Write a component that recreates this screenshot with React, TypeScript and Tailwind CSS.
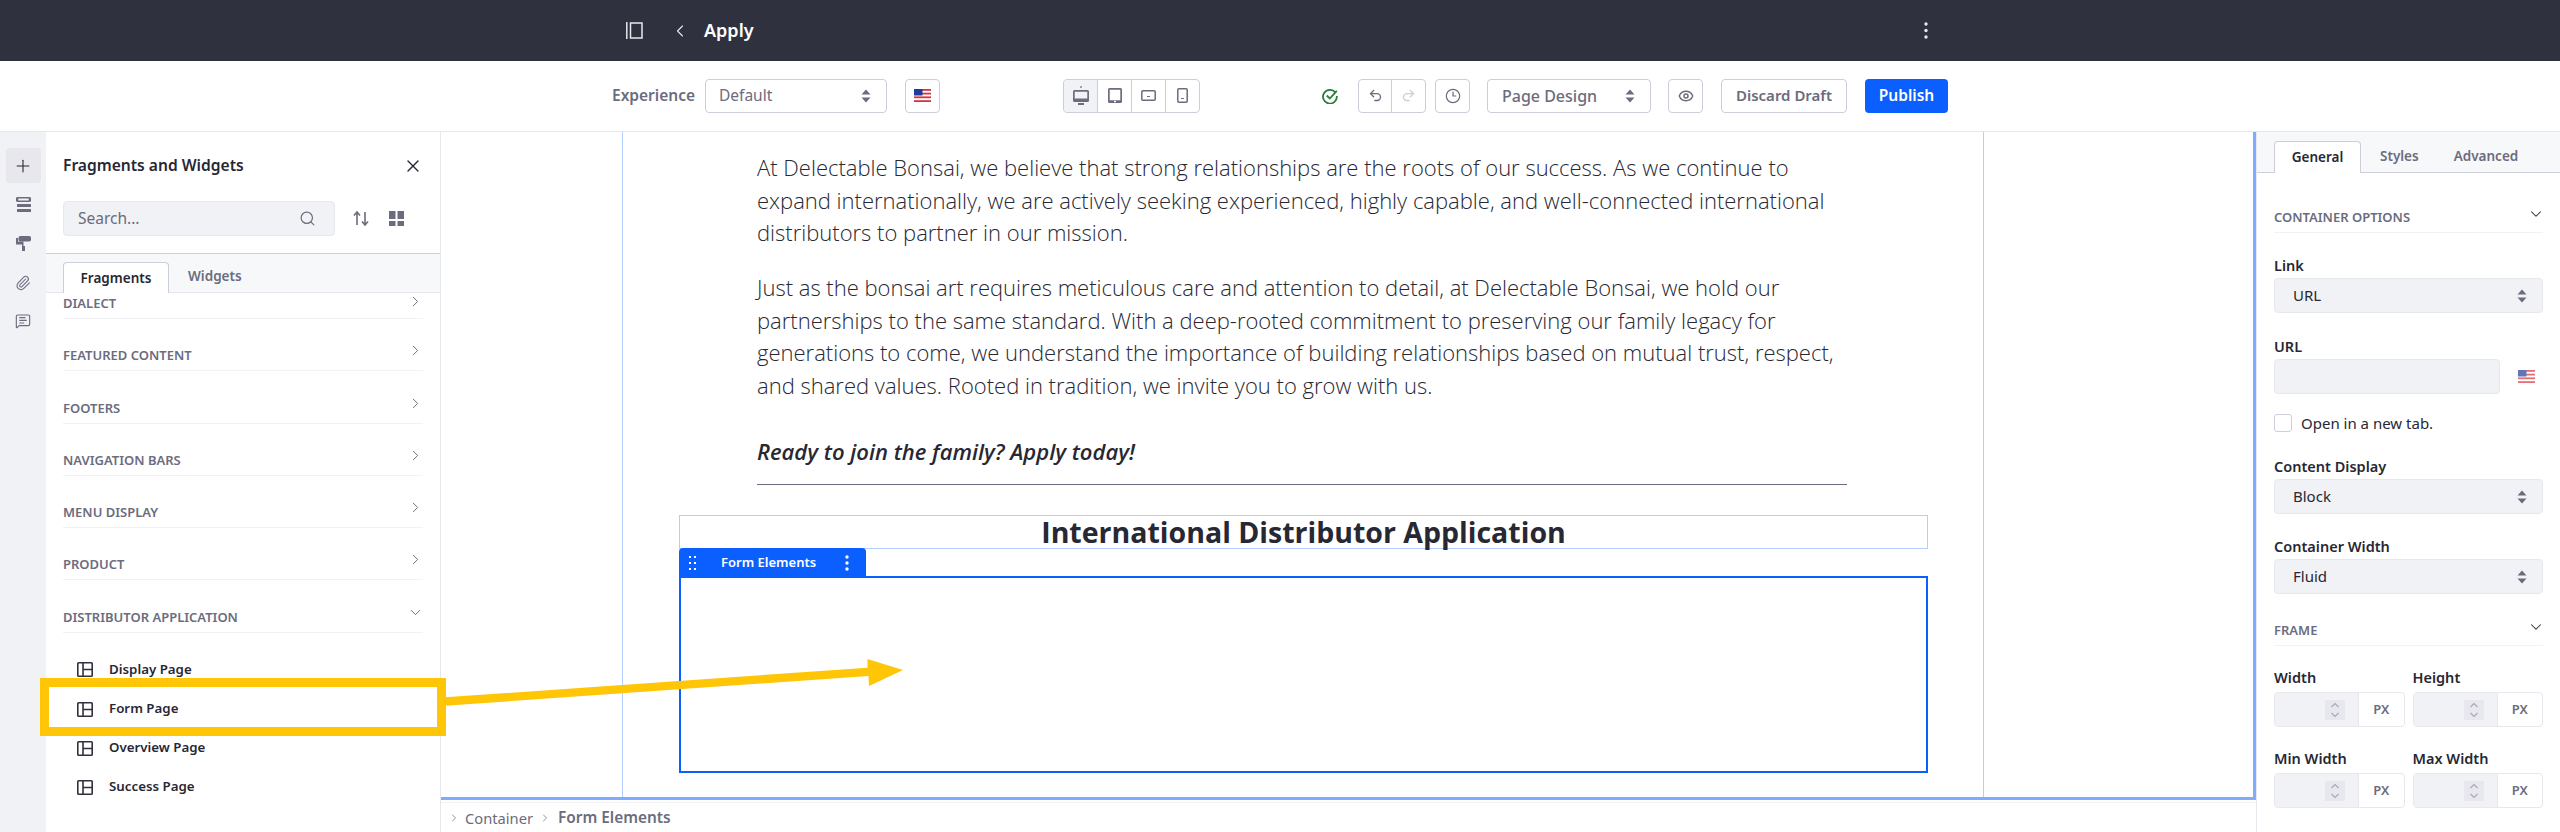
import { ChevronDown, ChevronLeft, ChevronRight, Clock3, Eye, MessageSquareText, Paperclip, Plus, Redo2, Search, Undo2, X } from "lucide-react";

const categories = ["FEATURED CONTENT", "FOOTERS", "NAVIGATION BARS", "MENU DISPLAY", "PRODUCT"];
const pages = ["Display Page", "Form Page", "Overview Page", "Success Page"];

function Updown({ className = "text-[#6b6c7e]" }: { className?: string }) {
  return (
    <svg width="10" height="14" viewBox="0 0 10 14" className={className} fill="currentColor">
      <path d="M5 0.500 9.500 5.500H0.500Z" />
      <path d="M5 13.500 0.500 8.500H9.500Z" />
    </svg>
  );
}

function Flag({ faded = false }: { faded?: boolean }) {
  return (
    <svg width="17" height="13" viewBox="0 0 17 13" className={faded ? "opacity-70" : ""}>
      <rect width="17" height="13" fill="#fff" />
      <rect y="0" width="17" height="1.800" fill="#d8343c" />
      <rect y="3.700" width="17" height="1.800" fill="#d8343c" />
      <rect y="7.400" width="17" height="1.800" fill="#d8343c" />
      <rect y="11.200" width="17" height="1.800" fill="#d8343c" />
      <rect width="8.500" height="6.500" fill="#1f3b9b" />
    </svg>
  );
}

function PageIcon() {
  return (
    <svg width="16" height="15" viewBox="0 0 16 15" fill="none" stroke="#30313f" strokeWidth="1.600">
      <rect x="0.800" y="0.800" width="14.400" height="13.400" rx="0.800" />
      <path d="M6 1v13M6 7.500h9.500" />
    </svg>
  );
}

function PanelSelect({ value }: { value: string }) {
  return (
    <div className="flex h-[35px] items-center justify-between rounded-[4px] border border-[#e7e7ed] bg-[#f1f2f5] pl-[18px] pr-[15px] text-[15px] text-[#272833]">
      <span>{value}</span>
      <Updown />
    </div>
  );
}

function Label({ children }: { children: string }) {
  return <div className="mb-[4px] text-[14.500px] font-semibold leading-[18px] text-[#272833]">{children}</div>;
}

function SectionHead({ title }: { title: string }) {
  return (
    <div className="flex h-[30px] items-start justify-between border-b border-[#f1f2f5]">
      <span className="pt-[6px] text-[13px] font-semibold leading-[16px] text-[#6b6c7e]">{title}</span>
      <ChevronDown size={18} strokeWidth={1.400} className="mr-[-2px] mt-[2px] text-[#272833]" />
    </div>
  );
}

function PxInput({ label }: { label: string }) {
  return (
    <div className="w-[131px]">
      <div className="mb-[6px] text-[14.500px] font-semibold leading-[18px] text-[#272833]">{label}</div>
      <div className="flex h-[35px] overflow-hidden rounded-[4px] border border-[#e7e7ed]">
        <div className="flex w-[83px] items-center justify-end bg-[#f1f2f5] pr-[13px]">
          <div className="flex h-[20px] w-[20px] flex-col items-center justify-center bg-[#e7e7ed] text-[#a7a9bc]">
            <svg width="10" height="16" viewBox="0 0 10 16" fill="none" stroke="currentColor" strokeWidth="1.200">
              <path d="M1.500 5 5 1.500 8.500 5M1.500 11 5 14.500 8.500 11" />
            </svg>
          </div>
        </div>
        <div className="flex flex-1 items-center justify-center border-l border-[#e7e7ed] text-[13px] font-semibold text-[#6b6c7e]">PX</div>
      </div>
    </div>
  );
}

function IconBtn({ children, className = "" }: { children: React.ReactNode; className?: string }) {
  return (
    <div className={`flex h-[34px] w-[35px] items-center justify-center rounded-[4px] border border-[#cdced9] bg-white text-[#6b6c7e] ${className}`}>
      {children}
    </div>
  );
}

function DeviceIcon({ kind }: { kind: "desktop" | "tablet" | "land" | "phone" }) {
  if (kind === "desktop")
    return (
      <svg width="16" height="20" viewBox="0 0 16 20" fill="#6b6c7e">
        <rect x="7.400" y="0" width="1.200" height="2" />
        <path d="M1.500 4h13A1.500 1.500 0 0 1 16 5.500v9a1.500 1.500 0 0 1-1.500 1.500h-13A1.500 1.500 0 0 1 0 14.500v-9A1.500 1.500 0 0 1 1.500 4Zm.2 1.800v6.700h12.600V5.800Z" fillRule="evenodd" />
        <rect x="5" y="17" width="6" height="2" />
      </svg>
    );
  if (kind === "tablet")
    return (
      <svg width="14" height="15" viewBox="0 0 14 15" fill="#6b6c7e">
        <path d="M1.500 0h11A1.500 1.500 0 0 1 14 1.500v12a1.500 1.500 0 0 1-1.500 1.500h-11A1.500 1.500 0 0 1 0 13.500v-12A1.500 1.500 0 0 1 1.500 0Zm.2 1.700v10.600h10.600V1.700Z" fillRule="evenodd" />
        <rect x="6" y="12.800" width="2" height="1.400" fill="#fff" />
      </svg>
    );
  if (kind === "land")
    return (
      <svg width="15" height="11" viewBox="0 0 15 11" fill="none" stroke="#6b6c7e" strokeWidth="1.500">
        <rect x="0.800" y="0.800" width="13.400" height="9.400" rx="1" />
        <path d="M6 6.500h3" strokeWidth="1" />
      </svg>
    );
  return (
    <svg width="11" height="15" viewBox="0 0 11 15" fill="none" stroke="#6b6c7e" strokeWidth="1.500">
      <rect x="0.800" y="0.800" width="9.400" height="13.400" rx="1" />
      <path d="M4 10.500h3" strokeWidth="1" />
    </svg>
  );
}

function Toolbar() {
  return (
    <div className="flex h-[71px] shrink-0 items-center border-b border-[#e7e7ed] bg-white pb-[1px] text-[15.500px] text-[#6b6c7e]">
      <span className="ml-[612px] w-[84px] whitespace-nowrap font-semibold">Experience</span>
      <div className="ml-[9px] flex h-[34px] w-[182px] items-center justify-between rounded-[4px] border border-[#cdced9] pl-[13px] pr-[15px]">
        <span>Default</span>
        <Updown />
      </div>
      <IconBtn className="ml-[18px]">
        <Flag />
      </IconBtn>
      <div className="ml-[123px] flex h-[34px] w-[137px] rounded-[4px] border border-[#cdced9]">
        <div className="flex w-[34px] items-center justify-center rounded-l-[4px] border-r border-[#cdced9] bg-[#f1f2f5]">
          <DeviceIcon kind="desktop" />
        </div>
        <div className="flex w-[34px] items-center justify-center border-r border-[#cdced9]">
          <DeviceIcon kind="tablet" />
        </div>
        <div className="flex w-[34px] items-center justify-center border-r border-[#cdced9]">
          <DeviceIcon kind="land" />
        </div>
        <div className="flex flex-1 items-center justify-center">
          <DeviceIcon kind="phone" />
        </div>
      </div>
      <svg width="16" height="16" viewBox="0 0 16 16" fill="none" stroke="#287d3c" strokeWidth="1.800" className="ml-[122px]">
        <path d="M13.400 4.500A6.900 6.900 0 1 0 14.800 8" />
        <path d="M4.800 7.500 7.800 10.500 14.800 2.800" />
      </svg>
      <div className="ml-[20px] flex h-[34px] w-[68px] rounded-[4px] border border-[#cdced9]">
        <div className="flex w-[33px] items-center justify-center border-r border-[#cdced9]">
          <Undo2 size={15} strokeWidth={2.200} />
        </div>
        <div className="flex flex-1 items-center justify-center text-[#cdced9]">
          <Redo2 size={15} strokeWidth={2.200} />
        </div>
      </div>
      <IconBtn className="ml-[9px]">
        <Clock3 size={16} strokeWidth={1.800} />
      </IconBtn>
      <div className="ml-[17px] flex h-[34px] w-[164px] items-center justify-between rounded-[4px] border border-[#cdced9] pl-[14px] pr-[15px] text-[16px] font-medium">
        <span>Page Design</span>
        <Updown />
      </div>
      <IconBtn className="ml-[17px]">
        <Eye size={16} strokeWidth={2.200} />
      </IconBtn>
      <div className="ml-[18px] flex h-[34px] w-[126px] items-center justify-center rounded-[4px] border border-[#cdced9] text-[15px] font-semibold">
        Discard Draft
      </div>
      <div className="ml-[18px] flex h-[34px] w-[83px] items-center justify-center rounded-[4px] bg-[#0b5fff] font-semibold text-white">
        Publish
      </div>
    </div>
  );
}

function Rail() {
  return (
    <div className="flex w-[46px] shrink-0 flex-col items-center bg-[#f1f2f5] pt-[16px] text-[#6b6c7e]">
      <div className="flex h-[35px] w-[35px] items-center justify-center rounded-[4px] bg-[#e7e7ed] text-[#272833]">
        <Plus size={20} strokeWidth={1.300} />
      </div>
      <svg width="15" height="15" viewBox="0 0 15 15" fill="#6b6c7e" className="mt-[14px]">
        <path d="M2 0h11a1.500 1.500 0 0 1 0 5H2a1.500 1.500 0 0 1 0-5Zm.3 1.500v2h10.400v-2Z" fillRule="evenodd" />
        <rect x="1" y="7" width="14" height="3" rx="0.600" />
        <rect x="1" y="12" width="14" height="3" rx="0.600" />
      </svg>
      <svg width="15" height="15" viewBox="0 0 15 15" fill="#6b6c7e" className="mt-[24px]">
        <rect x="2.500" y="0" width="12.500" height="5.500" rx="1.800" />
        <path d="M0 2h2v3.500h5.500V10H9v5H6V8.500H0Z" />
      </svg>
      <Paperclip size={16} strokeWidth={1.600} className="mt-[24px]" />
      <MessageSquareText size={16} strokeWidth={1.700} className="mt-[22px]" />
    </div>
  );
}

function Panel() {
  return (
    <div className="flex w-[395px] shrink-0 flex-col border-r border-[#e7e7ed] bg-white">
      <div className="flex h-[121px] shrink-0 flex-col px-[17px] pt-[21px]">
        <div className="flex h-[26px] items-center justify-between">
          <span className="text-[15.600px] font-semibold text-[#272833]">Fragments and Widgets</span>
          <X size={20} strokeWidth={1.600} className="text-[#272833]" />
        </div>
        <div className="mt-[22px] flex items-center">
          <div className="flex h-[35px] w-[272px] items-center justify-between rounded-[4px] border border-[#e7e7ed] bg-[#f1f2f5] pl-[14px] pr-[18px] text-[15.500px] text-[#6b6c7e]">
            <span>Search...</span>
            <Search size={17} strokeWidth={1.700} />
          </div>
          <svg width="16" height="15" viewBox="0 0 16 15" fill="none" stroke="#6b6c7e" strokeWidth="1.600" className="ml-[18px]">
            <path d="M4 14V1M1 4.500 4 1l3 3.500M12 1v13M9 10.500 12 14l3-3.500" />
          </svg>
          <svg width="15" height="15" viewBox="0 0 15 15" fill="#6b6c7e" className="ml-[20px]">
            <rect width="6.500" height="8" />
            <rect x="8.500" width="6.500" height="8" />
            <rect y="10" width="6.500" height="5" />
            <rect x="8.500" y="10" width="6.500" height="5" />
          </svg>
        </div>
      </div>
      <div className="flex h-[40px] shrink-0 items-end border-y border-[#cdced9] border-b-[#e7e7ed] bg-[#f7f8f9] pl-[17px]">
        <div className="mb-[-1px] flex h-[31px] w-[106px] items-center justify-center rounded-t-[4px] border border-b-0 border-[#cdced9] bg-white text-[13.500px] font-semibold text-[#272833]">
          Fragments
        </div>
        <div className="flex h-[31px] items-center pl-[19px] text-[13.500px] font-semibold text-[#6b6c7e]">Widgets</div>
      </div>
      <div className="flex flex-1 flex-col overflow-hidden px-[17px]">
        <div className="flex h-[26px] shrink-0 items-start justify-between border-b border-[#f1f2f5]">
          <span className="text-[13px] font-semibold leading-[20px] text-[#6b6c7e]">DIALECT</span>
          <ChevronRight size={17} strokeWidth={1.400} className="mr-[-1px] text-[#6b6c7e]" />
        </div>
        {categories.map((name) => (
          <div key={name} className="flex h-[52.300px] shrink-0 items-end justify-between border-b border-[#f1f2f5] pb-[5px]">
            <span className="text-[13px] font-semibold leading-[20px] text-[#6b6c7e]">{name}</span>
            <ChevronRight size={17} strokeWidth={1.400} className="mb-[6px] mr-[-1px] text-[#6b6c7e]" />
          </div>
        ))}
        <div className="flex h-[52.300px] shrink-0 items-end justify-between border-b border-[#f1f2f5] pb-[5px]">
          <span className="text-[13px] font-semibold leading-[20px] text-[#6b6c7e]">DISTRIBUTOR APPLICATION</span>
          <ChevronDown size={17} strokeWidth={1.400} className="mb-[6px] mr-[-1px] text-[#6b6c7e]" />
        </div>
        <div className="pt-[17.500px]">
          {pages.map((page) => (
            <div key={page} className="flex h-[39.200px] items-center pl-[14px]">
              <PageIcon />
              <span className="ml-[16px] text-[13.300px] font-semibold text-[#272833]">{page}</span>
            </div>
          ))}
        </div>
      </div>
    </div>
  );
}

function Canvas() {
  return (
    <div className="flex min-w-0 flex-1 flex-col bg-white">
      <div className="h-[668px] shrink-0 overflow-hidden border-b-[3px] border-r-[3px] border-[#80acff]">
        <div className="ml-[181px] h-full w-[1362px] border-x border-[#b3cdff] pt-[19px]">
          <div className="ml-[134px] w-[1092px] font-['Open_Sans',sans-serif] text-[22px] font-light leading-[32.600px] text-[#272833]">
            <p>
              At Delectable Bonsai, we believe that strong relationships are the roots of our success. As we continue to
              <br />
              expand internationally, we are actively seeking experienced, highly capable, and well-connected international
              <br />
              distributors to partner in our mission.
            </p>
            <p className="mt-[22.400px]">
              Just as the bonsai art requires meticulous care and attention to detail, at Delectable Bonsai, we hold our
              <br />
              partnerships to the same standard. With a deep-rooted commitment to preserving our family legacy for
              <br />
              generations to come, we understand the importance of building relationships based on mutual trust, respect,
              <br />
              and shared values. Rooted in tradition, we invite you to grow with us.
            </p>
            <p className="mt-[33px] font-semibold italic">Ready to join the family? Apply today!</p>
            <div className="mt-[17px] h-[1px] w-[1090px] bg-[#6b6c7e]" />
          </div>
          <div className="ml-[56px] mt-[30px] w-[1249px]">
            <div className="flex h-[34px] items-center justify-center border border-[#b3cdff] font-['Open_Sans',sans-serif] text-[28.500px] font-bold text-[#272833]">
              International Distributor Application
            </div>
            <div className="relative mt-[27px] h-[197px] border-2 border-[#0b5fff]">
              <div className="absolute left-[-2px] top-[-30px] flex h-[30px] w-[187px] items-center rounded-t-[4px] bg-[#0b5fff] text-white">
                <svg width="8" height="14" viewBox="0 0 8 14" fill="#fff" className="ml-[10px]">
                  <rect width="2" height="2" y="0" />
                  <rect width="2" height="2" x="5" y="0" />
                  <rect width="2" height="2" y="6" />
                  <rect width="2" height="2" x="5" y="6" />
                  <rect width="2" height="2" y="12" />
                  <rect width="2" height="2" x="5" y="12" />
                </svg>
                <span className="ml-[24px] text-[13px] font-semibold">Form Elements</span>
                <svg width="4" height="16" viewBox="0 0 4 16" fill="#fff" className="ml-[29px]">
                  <circle cx="2" cy="2" r="1.700" />
                  <circle cx="2" cy="8" r="1.700" />
                  <circle cx="2" cy="14" r="1.700" />
                </svg>
              </div>
            </div>
          </div>
        </div>
      </div>
      <div className="mt-[2px] flex flex-1 items-center border-t border-[#f1f2f5] pl-[7px] pt-[1px] text-[14.700px] text-[#6b6c7e]">
        <ChevronRight size={12} strokeWidth={1.500} />
        <span className="ml-[5px]">Container</span>
        <ChevronRight size={12} strokeWidth={1.500} className="ml-[6px]" />
        <span className="ml-[7px] text-[15.400px] font-semibold">Form Elements</span>
      </div>
    </div>
  );
}

function RightPanel() {
  return (
    <div className="flex w-[304px] shrink-0 flex-col border-l border-[#e7e7ed] bg-white">
      <div className="flex h-[41px] shrink-0 items-end border-b border-[#cdced9] bg-[#f7f8f9] pl-[17px] text-[13.500px] font-semibold text-[#6b6c7e]">
        <div className="mb-[-1px] flex h-[32px] w-[87px] items-center justify-center rounded-t-[4px] border border-b-0 border-[#cdced9] bg-white text-[#272833]">
          General
        </div>
        <div className="flex h-[31px] items-center pl-[19px]">Styles</div>
        <div className="flex h-[31px] items-center pl-[35px]">Advanced</div>
      </div>
      <div className="flex-1 px-[17px] pt-[30px]">
        <SectionHead title="CONTAINER OPTIONS" />
        <div className="mt-[23px]">
          <Label>Link</Label>
          <PanelSelect value="URL" />
        </div>
        <div className="mt-[24px]">
          <Label>URL</Label>
          <div className="flex items-center">
            <div className="h-[35px] w-[226px] rounded-[4px] border border-[#e7e7ed] bg-[#f1f2f5]" />
            <div className="ml-[18px] flex items-center">
              <Flag faded />
            </div>
          </div>
        </div>
        <div className="mt-[20px] flex h-[18px] items-center">
          <div className="h-[18px] w-[18px] rounded-[3px] border border-[#cdced9] bg-white" />
          <span className="ml-[9px] text-[15px] text-[#272833]">Open in a new tab.</span>
        </div>
        <div className="mt-[25px]">
          <Label>Content Display</Label>
          <PanelSelect value="Block" />
        </div>
        <div className="mt-[23px]">
          <Label>Container Width</Label>
          <PanelSelect value="Fluid" />
        </div>
        <div className="mt-[22px]">
          <SectionHead title="FRAME" />
        </div>
        <div className="mt-[22px] flex gap-[8px]">
          <PxInput label="Width" />
          <PxInput label="Height" />
        </div>
        <div className="mt-[22px] flex gap-[8px]">
          <PxInput label="Min Width" />
          <PxInput label="Max Width" />
        </div>
      </div>
    </div>
  );
}

export default function App() {
  return (
    <div className="relative flex h-[832px] w-[2560px] flex-col overflow-hidden bg-white font-['Noto_Sans',sans-serif]">
      <div className="flex h-[61px] shrink-0 items-center bg-[#30313f] text-white">
        <svg width="17" height="17" viewBox="0 0 17 17" fill="none" stroke="#e7e7ed" strokeWidth="1.500" className="ml-[626px]">
          <path d="M0.800 0v17" />
          <rect x="4.500" y="1" width="11.500" height="15" />
        </svg>
        <ChevronLeft size={20} strokeWidth={1.300} className="ml-[27px] text-[#e7e7ed]" />
        <span className="ml-[14px] w-[49px] whitespace-nowrap text-[18px] font-semibold">Apply</span>
        <svg width="4" height="17" viewBox="0 0 4 17" fill="#e7e7ed" className="ml-[1171px]">
          <circle cx="2" cy="2" r="1.700" />
          <circle cx="2" cy="8.500" r="1.700" />
          <circle cx="2" cy="15" r="1.700" />
        </svg>
      </div>
      <Toolbar />
      <div className="flex min-h-0 flex-1">
        <Rail />
        <Panel />
        <Canvas />
        <RightPanel />
      </div>

      {/* yellow callout drawn over the screenshot */}
      <div className="absolute left-[40px] top-[678px] h-[58px] w-[406px] border-[9px] border-[#ffc507]" />
      <svg width="470" height="60" viewBox="440 650 470 60" className="absolute left-[440px] top-[650px]" fill="#ffc507">
        <path d="M445 697.300 867.500 667.700 867.500 659 903 670 869 686 868.500 676 445 705.800Z" />
      </svg>
    </div>
  );
}
